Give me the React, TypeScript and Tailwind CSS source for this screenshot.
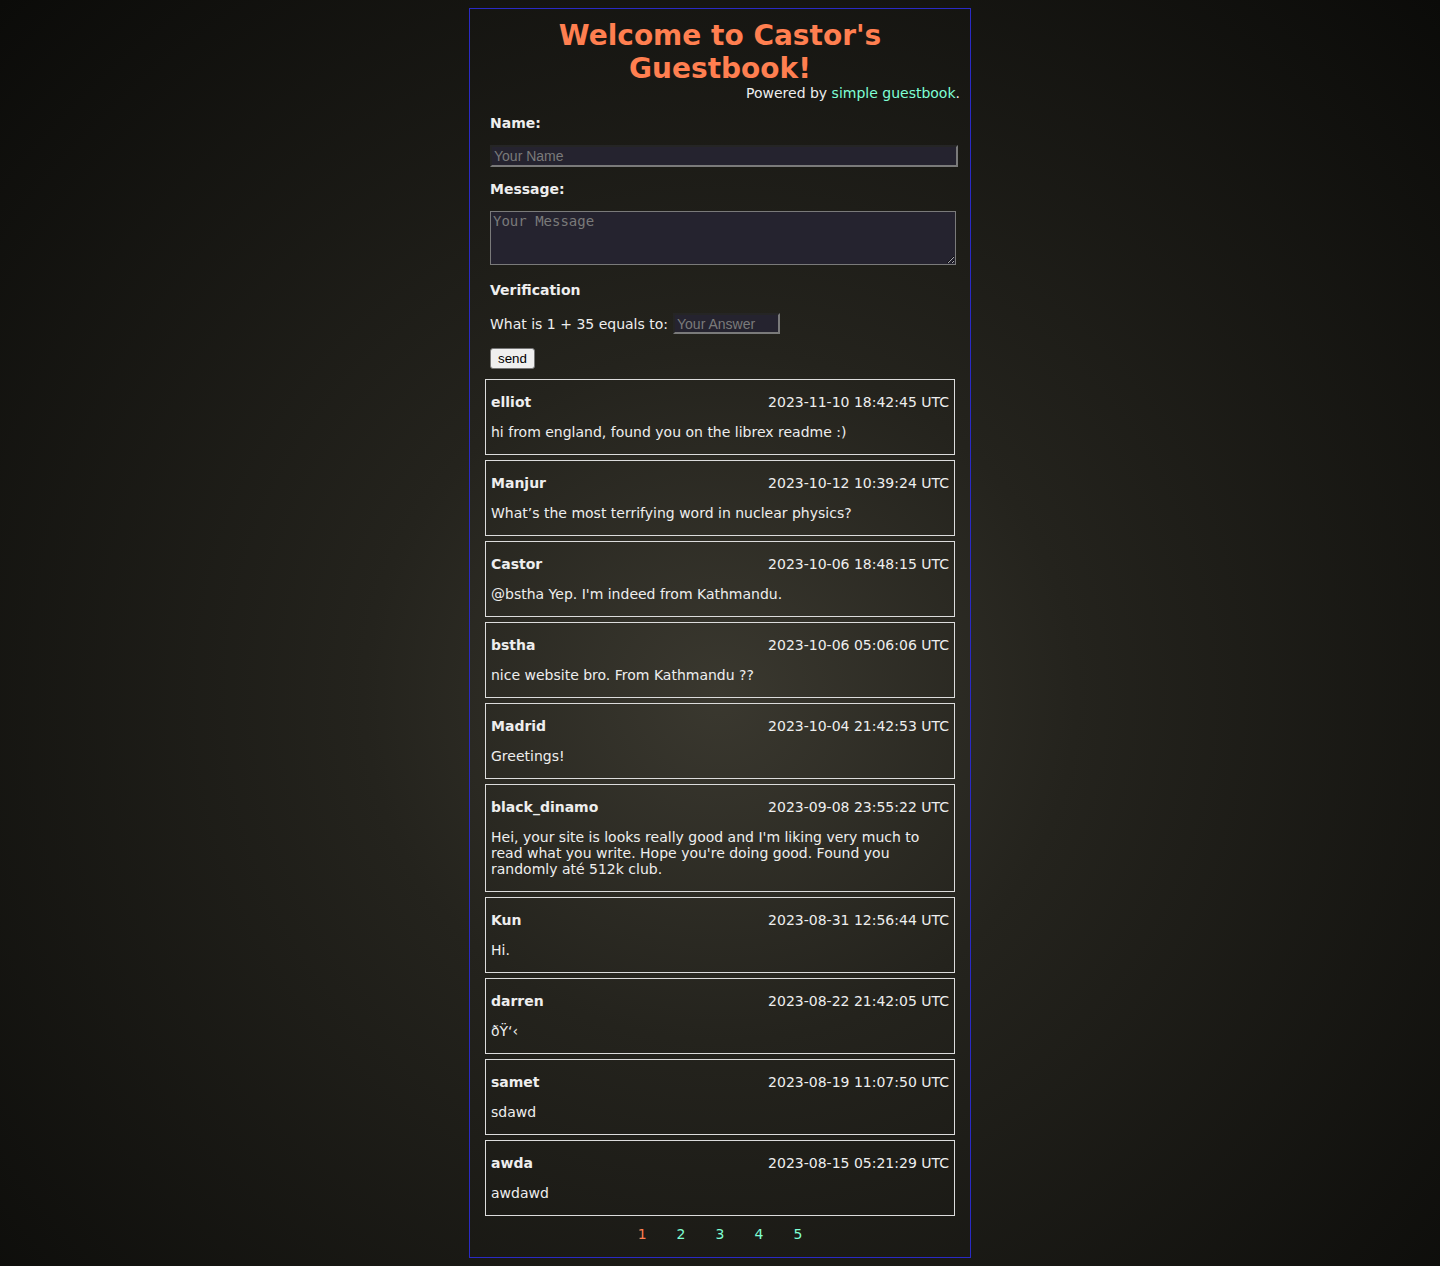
import React from "react"

type Entry = { name: string; date: string; message: string }

const ENTRIES: Entry[] = [
    { name: "elliot", date: "2023-11-10 18:42:45 UTC", message: "hi from england, found you on the librex readme :)" },
    { name: "Manjur", date: "2023-10-12 10:39:24 UTC", message: "What\u2019s the most terrifying word in nuclear physics?" },
    { name: "Castor", date: "2023-10-06 18:48:15 UTC", message: "@bstha Yep. I'm indeed from Kathmandu." },
    { name: "bstha", date: "2023-10-06 05:06:06 UTC", message: "nice website bro. From Kathmandu ??" },
    { name: "Madrid", date: "2023-10-04 21:42:53 UTC", message: "Greetings!" },
    {
        name: "black_dinamo",
        date: "2023-09-08 23:55:22 UTC",
        message: "Hei, your site is looks really good and I'm liking very much to read what you write. Hope you're doing good. Found you randomly até 512k club.",
    },
    { name: "Kun", date: "2023-08-31 12:56:44 UTC", message: "Hi." },
    { name: "darren", date: "2023-08-22 21:42:05 UTC", message: "\u00f0\u0178\u2018\u2039" },
    { name: "samet", date: "2023-08-19 11:07:50 UTC", message: "sdawd" },
    { name: "awda", date: "2023-08-15 05:21:29 UTC", message: "awdawd" },
]

const PAGES = [1, 2, 3, 4, 5]

export default function App() {
    return (
        <div
            className="min-h-[1266px] pt-2 pb-2 text-[14px] text-[#eeeeee] bg-[radial-gradient(ellipse_at_50%_55%,#3a382f_0%,#24231d_35%,#0b0b09_100%)]"
            style={{ fontFamily: "'DejaVu Sans', sans-serif" }}
        >
            <div className="mx-auto w-[502px] border border-[#2a2ac4] px-[10px] pt-[10px] pb-[15px]">
                <h1 className="text-center text-[28px] leading-[33px] font-bold text-[#ff7f50]">
                    Welcome to Castor's Guestbook!
                </h1>
                <p className="text-right leading-4">
                    Powered by <a href="#" className="text-[#7fffd4]">simple guestbook</a>.
                </p>

                <form className="px-[10px]" onSubmit={e => e.preventDefault()}>
                    <label className="block mt-[14px] leading-4 font-bold">Name:</label>
                    <input
                        type="text"
                        placeholder="Your Name"
                        className="block mt-[14px] w-[468px] h-[22px] px-[2px] bg-[#25232f] border-2 border-[#7a7a7a] [border-style:inset] text-[14px] text-[#eeeeee] placeholder:text-[#7a7a7a] outline-none"
                        style={{ fontFamily: "'Liberation Sans', Arial, sans-serif" }}
                    />

                    <label className="block mt-[14px] leading-4 font-bold">Message:</label>
                    <textarea
                        placeholder="Your Message"
                        className="block mt-[14px] w-[466px] h-[54px] px-[2px] py-[1px] bg-[#25232f] border border-[#7a7a7a] text-[14px] leading-4 text-[#eeeeee] placeholder:text-[#7a7a7a] outline-none"
                        style={{ fontFamily: "'DejaVu Sans Mono', monospace" }}
                    />

                    <p className="mt-[17px] leading-4 font-bold">Verification</p>
                    <div className="mt-[15px] h-[21px] flex items-center gap-[5px] leading-4">
                        <span>What is 1 + 35 equals to:</span>
                        <input
                            type="text"
                            placeholder="Your Answer"
                            className="w-[107px] h-[21px] px-[2px] bg-[#25232f] border-2 border-[#7a7a7a] [border-style:inset] text-[14px] text-[#eeeeee] placeholder:text-[#7a7a7a] outline-none"
                            style={{ fontFamily: "'Liberation Sans', Arial, sans-serif" }}
                        />
                    </div>

                    <button
                        type="submit"
                        className="block mt-[14px] h-[21px] px-[7px] bg-[#efefef] border border-[#767676] rounded-[3px] text-[13.33px] leading-none text-black"
                        style={{ fontFamily: "'Liberation Sans', Arial, sans-serif" }}
                    >
                        send
                    </button>
                </form>

                <div className="mt-[10px] mx-[5px] flex flex-col gap-[5px]">
                    {ENTRIES.map(entry => (
                        <div key={entry.name + entry.date} className="border border-[#dcdcdc] px-[5px] py-[14px]">
                            <div className="flex justify-between leading-4">
                                <span className="font-bold">{entry.name}</span>
                                <span>{entry.date}</span>
                            </div>
                            <p className="mt-[14px] leading-4">{entry.message}</p>
                        </div>
                    ))}
                </div>

                <div className="mt-[10px] flex justify-center gap-[30px] leading-4">
                    {PAGES.map(n => (
                        <a key={n} href="#" className={n === 1 ? "text-[#ff7f50]" : "text-[#7fffd4]"}>
                            {n}
                        </a>
                    ))}
                </div>
            </div>
        </div>
    )
}
